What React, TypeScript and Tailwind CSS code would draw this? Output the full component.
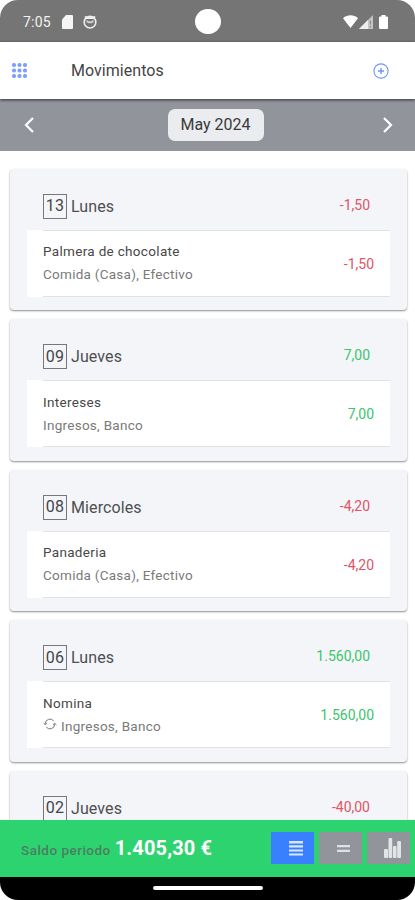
import { useState } from "react";

const initialDays = [
  {
    day: "13",
    name: "Lunes",
    total: "-1,50",
    items: [
      { title: "Palmera de chocolate", detail: "Comida (Casa), Efectivo", amount: "-1,50", recurrent: false },
    ],
  },
  {
    day: "09",
    name: "Jueves",
    total: "7,00",
    items: [{ title: "Intereses", detail: "Ingresos, Banco", amount: "7,00", recurrent: false }],
  },
  {
    day: "08",
    name: "Miercoles",
    total: "-4,20",
    items: [
      { title: "Panaderia", detail: "Comida (Casa), Efectivo", amount: "-4,20", recurrent: false },
    ],
  },
  {
    day: "06",
    name: "Lunes",
    total: "1.560,00",
    items: [{ title: "Nomina", detail: "Ingresos, Banco", amount: "1.560,00", recurrent: true }],
  },
  { day: "02", name: "Jueves", total: "-40,00", items: [] },
];

const amountColor = (amount: string) =>
  amount.startsWith("-") ? "text-[#e05468]" : "text-[#3cc46e]";

const StatusBar = () => (
  <div className="relative h-[42px] shrink-0 bg-[#757575] flex items-center justify-between pl-[23px] pr-[27px] text-white">
    <div className="flex items-center pt-px">
      <span className="text-[14px] tracking-[0.2px] text-[#f2f2f2] w-[39px] pt-px">7:05</span>
      <svg className="w-[11px] h-[14px]" viewBox="0 0 11 14" fill="#f5f5f5">
        <path d="M4 0h6a1 1 0 0 1 1 1v12a1 1 0 0 1-1 1H1a1 1 0 0 1-1-1V4.500z" />
      </svg>
      <svg className="ml-[10px] w-[14px] h-[14px]" viewBox="0 0 14 14">
        <circle cx="7" cy="7.200" r="5.800" fill="none" stroke="#ededed" strokeWidth="1.600" />
        <path d="M1.800 1l2.500.500h5.400l2.500-.500v3H1.800z" fill="#ededed" />
        <path d="M3.500 5l2.300 1.300h2.400L10.500 5v2.200l-2 1h-3l-2-1z" fill="#cfcfcf" />
      </svg>
    </div>
    <div className="absolute left-[195px] top-[9px] w-[26px] h-[25px] rounded-full bg-white"></div>
    <div className="flex items-center pt-px">
      <svg className="w-[15px] h-[13px]" viewBox="0 0 15 13" fill="#fff">
        <path d="M0 3.200C4.300-.6 10.700-.6 15 3.200L7.500 13z" />
      </svg>
      <svg className="ml-px w-[14px] h-[14px]" viewBox="0 0 14 14">
        <path d="M14 0v14H0z" fill="#c4c4c4" />
        <path d="M9 5v9H0z" fill="#eee" />
        <path d="M11.500 5.500v4M11.500 11v1.500" stroke="#858585" />
      </svg>
      <svg className="ml-[6px] w-[9px] h-[14px]" viewBox="0 0 9 14" fill="#fff">
        <path d="M2.500 0h4v1.500H8a1 1 0 0 1 1 1V13a1 1 0 0 1-1 1H1a1 1 0 0 1-1-1V2.500a1 1 0 0 1 1-1h1.500z" />
      </svg>
    </div>
  </div>
);

const Header = () => (
  <div className="relative z-10 h-[57px] shrink-0 bg-white flex items-center pl-[12px] pr-[26px] shadow-[0_1px_3px_rgba(0,0,0,0.65)]">
    <svg className="w-[15px] h-[15px]" viewBox="0 0 15 15" fill="#7e9ffb">
      {[0, 5.5, 11].map((y) =>
        [0, 5.5, 11].map((x) => (
          <rect key={`${x}-${y}`} x={x} y={y} width="4" height="4" rx="1.700" />
        ))
      )}
    </svg>
    <div className="ml-[44px] flex-1 text-[16px] tracking-[0.040px] text-[#444]">Movimientos</div>
    <svg className="w-[16px] h-[16px]" viewBox="0 0 16 16" fill="none" stroke="#6f95fb">
      <circle cx="8" cy="8" r="7.100" strokeWidth="1.100" />
      <path d="M8 5v6M5 8h6" strokeWidth="1.400" />
    </svg>
  </div>
);

const DayCard = ({ data }: { data: (typeof initialDays)[number] }) => (
  <div className="h-[141.600px] shrink-0 rounded-[4px] bg-[#f4f5f8] px-[17px] shadow-[0_1px_2px_rgba(0,0,0,0.45)]">
    <div className="h-[61px] flex items-center justify-between pl-[16px] pr-[20px] pt-[14px]">
      <div className="flex items-center">
        <div className="w-[24px] h-[25px] border border-[#777] flex items-center justify-center text-[16px] tracking-[0.2px] text-[#444548]">
          {data.day}
        </div>
        <div className="ml-[4px] pt-px text-[16px] tracking-[0.100px] text-[#4e4f52]">{data.name}</div>
      </div>
      <div className={`text-[14px] -mt-[2px] ${amountColor(data.total)}`}>{data.total}</div>
    </div>
    {data.items.map((item) => (
      <div key={item.title} className="h-[67px] bg-white pl-[16px]">
        <div className="h-full border-y border-[#e1e2e5] flex items-center justify-between pr-[16px]">
          <div>
            <div className="text-[13.500px] leading-[23px] tracking-[0.320px] text-[#484848]">{item.title}</div>
            <div className="flex items-center text-[13.500px] leading-[23px] tracking-[0.270px] text-[#7a7a7a]">
              {item.recurrent && (
                <svg className="mr-[4px] mb-[4px] w-[14px] h-[14px]" viewBox="0 0 14 14" fill="none" stroke="#777">
                  <path d="M2.300 7V6.700A4.700 4.700 0 0 1 10.700 3.900M11.700 7v.300A4.700 4.700 0 0 1 3.300 10.100" />
                  <path d="M.6 6.200l1.700 1.500L4 6.200M10 7.800l1.700-1.500 1.700 1.500" />
                </svg>
              )}
              {item.detail}
            </div>
          </div>
          <div className={`text-[14px] pt-[2px] ${amountColor(item.amount)}`}>{item.amount}</div>
        </div>
      </div>
    ))}
  </div>
);

const App = () => {
  const [days] = useState(initialDays);
  const [view, setView] = useState("list");

  return (
    <div className="w-[415px] h-[900px] bg-white">
      <div className="h-full flex flex-col overflow-hidden rounded-[18px] bg-white font-[Roboto,sans-serif]">
        <StatusBar />
        <Header />
        <div className="h-[52px] shrink-0 bg-[#92949c] flex items-center justify-between pl-[24px] pr-[22px]">
          <svg className="w-[10px] h-[16px]" viewBox="0 0 10 16" fill="none" stroke="#fff" strokeWidth="2.200">
            <path d="M9 1L2 8l7 7" />
          </svg>
          <div className="ml-[14px] h-[32px] w-[96px] rounded-[7px] bg-[#ebecef] flex items-center justify-center text-[16px] text-[#3a3a3a]">
            May 2024
          </div>
          <svg className="w-[10px] h-[16px]" viewBox="0 0 10 16" fill="none" stroke="#fff" strokeWidth="2.200">
            <path d="M1 1l7 7-7 7" />
          </svg>
        </div>
        <div className="flex-1 min-h-0 overflow-hidden flex flex-col gap-[9px] pt-[17.500px] pl-[10px] pr-[8px]">
          {days.map((data) => (
            <DayCard key={data.day} data={data} />
          ))}
        </div>
        <div className="h-[57px] shrink-0 bg-[#2dd36f] flex items-center pl-[21px] pr-[5px] pb-px">
          <div className="flex-1 flex items-baseline">
            <span className="text-[13.500px] tracking-[0.480px] font-medium text-[#4a8060]">Saldo periodo</span>
            <span className="ml-[4px] text-[20px] tracking-[0.150px] font-bold text-white">1.405,30 €</span>
          </div>
          <div className="flex gap-[4.500px]">
            <button
              onClick={() => setView("list")}
              className={`w-[43.500px] h-[32px] flex items-center justify-center pl-[7px] ${view === "list" ? "bg-[#3880ff]" : "bg-[#92949c]"}`}
            >
              <svg className="w-[14px] h-[15px]" viewBox="0 0 14 15" fill="#d9e6ff">
                <path d="M0 0h14v2.500H0zM0 4.200h14v2.300H0zM0 8.500h14v2H0zM0 12.500h14v2H0z" />
              </svg>
            </button>
            <button
              onClick={() => setView("summary")}
              className={`w-[43.500px] h-[32px] flex items-center justify-center pl-[7px] ${view === "summary" ? "bg-[#3880ff]" : "bg-[#92949c]"}`}
            >
              <svg className="w-[13px] h-[7px]" viewBox="0 0 13 7" fill="#e0e1e3">
                <path d="M0 0h13v2.300H0zM0 4.700h13V7H0z" />
              </svg>
            </button>
            <button
              onClick={() => setView("chart")}
              className={`w-[43.500px] h-[32px] flex items-center justify-center pl-[8px] ${view === "chart" ? "bg-[#3880ff]" : "bg-[#92949c]"}`}
            >
              <svg className="w-[17px] h-[20px]" viewBox="0 0 17 20" fill="#e3e4e6">
                <rect x="0" y="11" width="4" height="9" rx="1" />
                <rect x="4.500" y="0" width="3.700" height="20" rx="1" />
                <rect x="9" y="8" width="3.500" height="12" rx="1" />
                <rect x="13.200" y="3" width="3.800" height="17" rx="1" />
              </svg>
            </button>
          </div>
        </div>
        <div className="h-[23px] shrink-0 bg-black flex justify-center pt-[9px]">
          <div className="w-[110px] h-[4px] rounded-full bg-white"></div>
        </div>
      </div>
    </div>
  );
};

export default App;
